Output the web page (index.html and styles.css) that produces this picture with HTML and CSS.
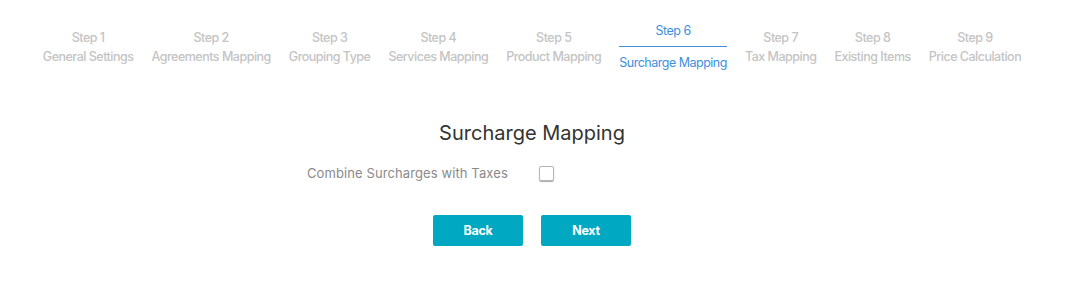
FILE: index.html
```html
<!DOCTYPE html>
<html lang="en">
<head>
    <meta charset="UTF-8">
    <meta name="viewport" content="width=device-width, initial-scale=1.0">
    <title>Surcharge Mapping</title>
    <link rel="stylesheet" href="styles.css">
</head>
<body>
    <div class="page">
        <ul class="steps">
            <li class="step"><span class="step-num">Step 1</span><span class="step-name">General Settings</span></li>
            <li class="step"><span class="step-num">Step 2</span><span class="step-name">Agreements Mapping</span></li>
            <li class="step"><span class="step-num">Step 3</span><span class="step-name">Grouping Type</span></li>
            <li class="step"><span class="step-num">Step 4</span><span class="step-name">Services Mapping</span></li>
            <li class="step"><span class="step-num">Step 5</span><span class="step-name">Product Mapping</span></li>
            <li class="step active"><span class="step-num">Step 6</span><span class="step-name">Surcharge Mapping</span></li>
            <li class="step"><span class="step-num">Step 7</span><span class="step-name">Tax Mapping</span></li>
            <li class="step"><span class="step-num">Step 8</span><span class="step-name">Existing Items</span></li>
            <li class="step"><span class="step-num">Step 9</span><span class="step-name">Price Calculation</span></li>
        </ul>

        <div class="form">
            <h2 class="title">Surcharge Mapping</h2>
            <label class="row">
                <span class="row-label">Combine Surcharges with Taxes</span>
                <span class="check"></span>
            </label>
            <div class="buttons">
                <button type="button" class="btn">Back</button>
                <button type="button" class="btn">Next</button>
            </div>
        </div>
    </div>
</body>
</html>
```

FILE: styles.css
```css
body {
    margin: 0;
    font-family: Inter, "Noto Sans", sans-serif;
    background: #fff;
}
.page {
    width: 1064px;
}
.steps {
    list-style: none;
    margin: 0;
    padding: 24px 0 0 0;
    display: flex;
    justify-content: center;
    gap: 18px;
}
.step {
    display: flex;
    flex-direction: column;
    align-items: center;
    color: #c4c4c4;
    font-size: 12.5px;
    font-weight: 500;
    letter-spacing: -0.5px;
}
.step-num {
    line-height: 16px;
    padding: 6px 0 3px 0;
}
.step-name {
    line-height: 16px;
}
.step.active {
    color: #3d8fe0;
    font-weight: 400;
}
.step.active .step-num {
    padding: 0 0 7px 0;
    border-bottom: 1px solid #3d8fe0;
    align-self: stretch;
    text-align: center;
    margin-top: -1px;
}
.step.active .step-name {
    padding-top: 8px;
}
.form {
    display: flex;
    flex-direction: column;
    align-items: center;
}
.title {
    margin: 0;
    margin-top: 50px;
    font-size: 20px;
    font-weight: 400;
    color: #333;
    line-height: 24px;
}
.row {
    display: flex;
    align-items: center;
    align-self: flex-start;
    margin-top: 20px;
    margin-left: 307px;
    gap: 32px;
    font-size: 13px;
    color: #8a8a8a;
    letter-spacing: 0.1px;
}
.check {
    width: 13px;
    height: 13px;
    border: 1px solid #b5b5b5;
    border-radius: 2px;
    box-shadow: 0 1px 1px #aaa;
    margin-left: -1px;
}
.buttons {
    display: flex;
    gap: 18px;
    margin-top: 34px;
}
.btn {
    width: 90px;
    height: 31px;
    border: none;
    border-radius: 2px;
    background-color: #00a9c1;
    color: #fff;
    font-family: Inter, "Noto Sans", sans-serif;
    font-weight: 700;
    font-size: 12.5px;
    letter-spacing: -0.3px;
}
```
